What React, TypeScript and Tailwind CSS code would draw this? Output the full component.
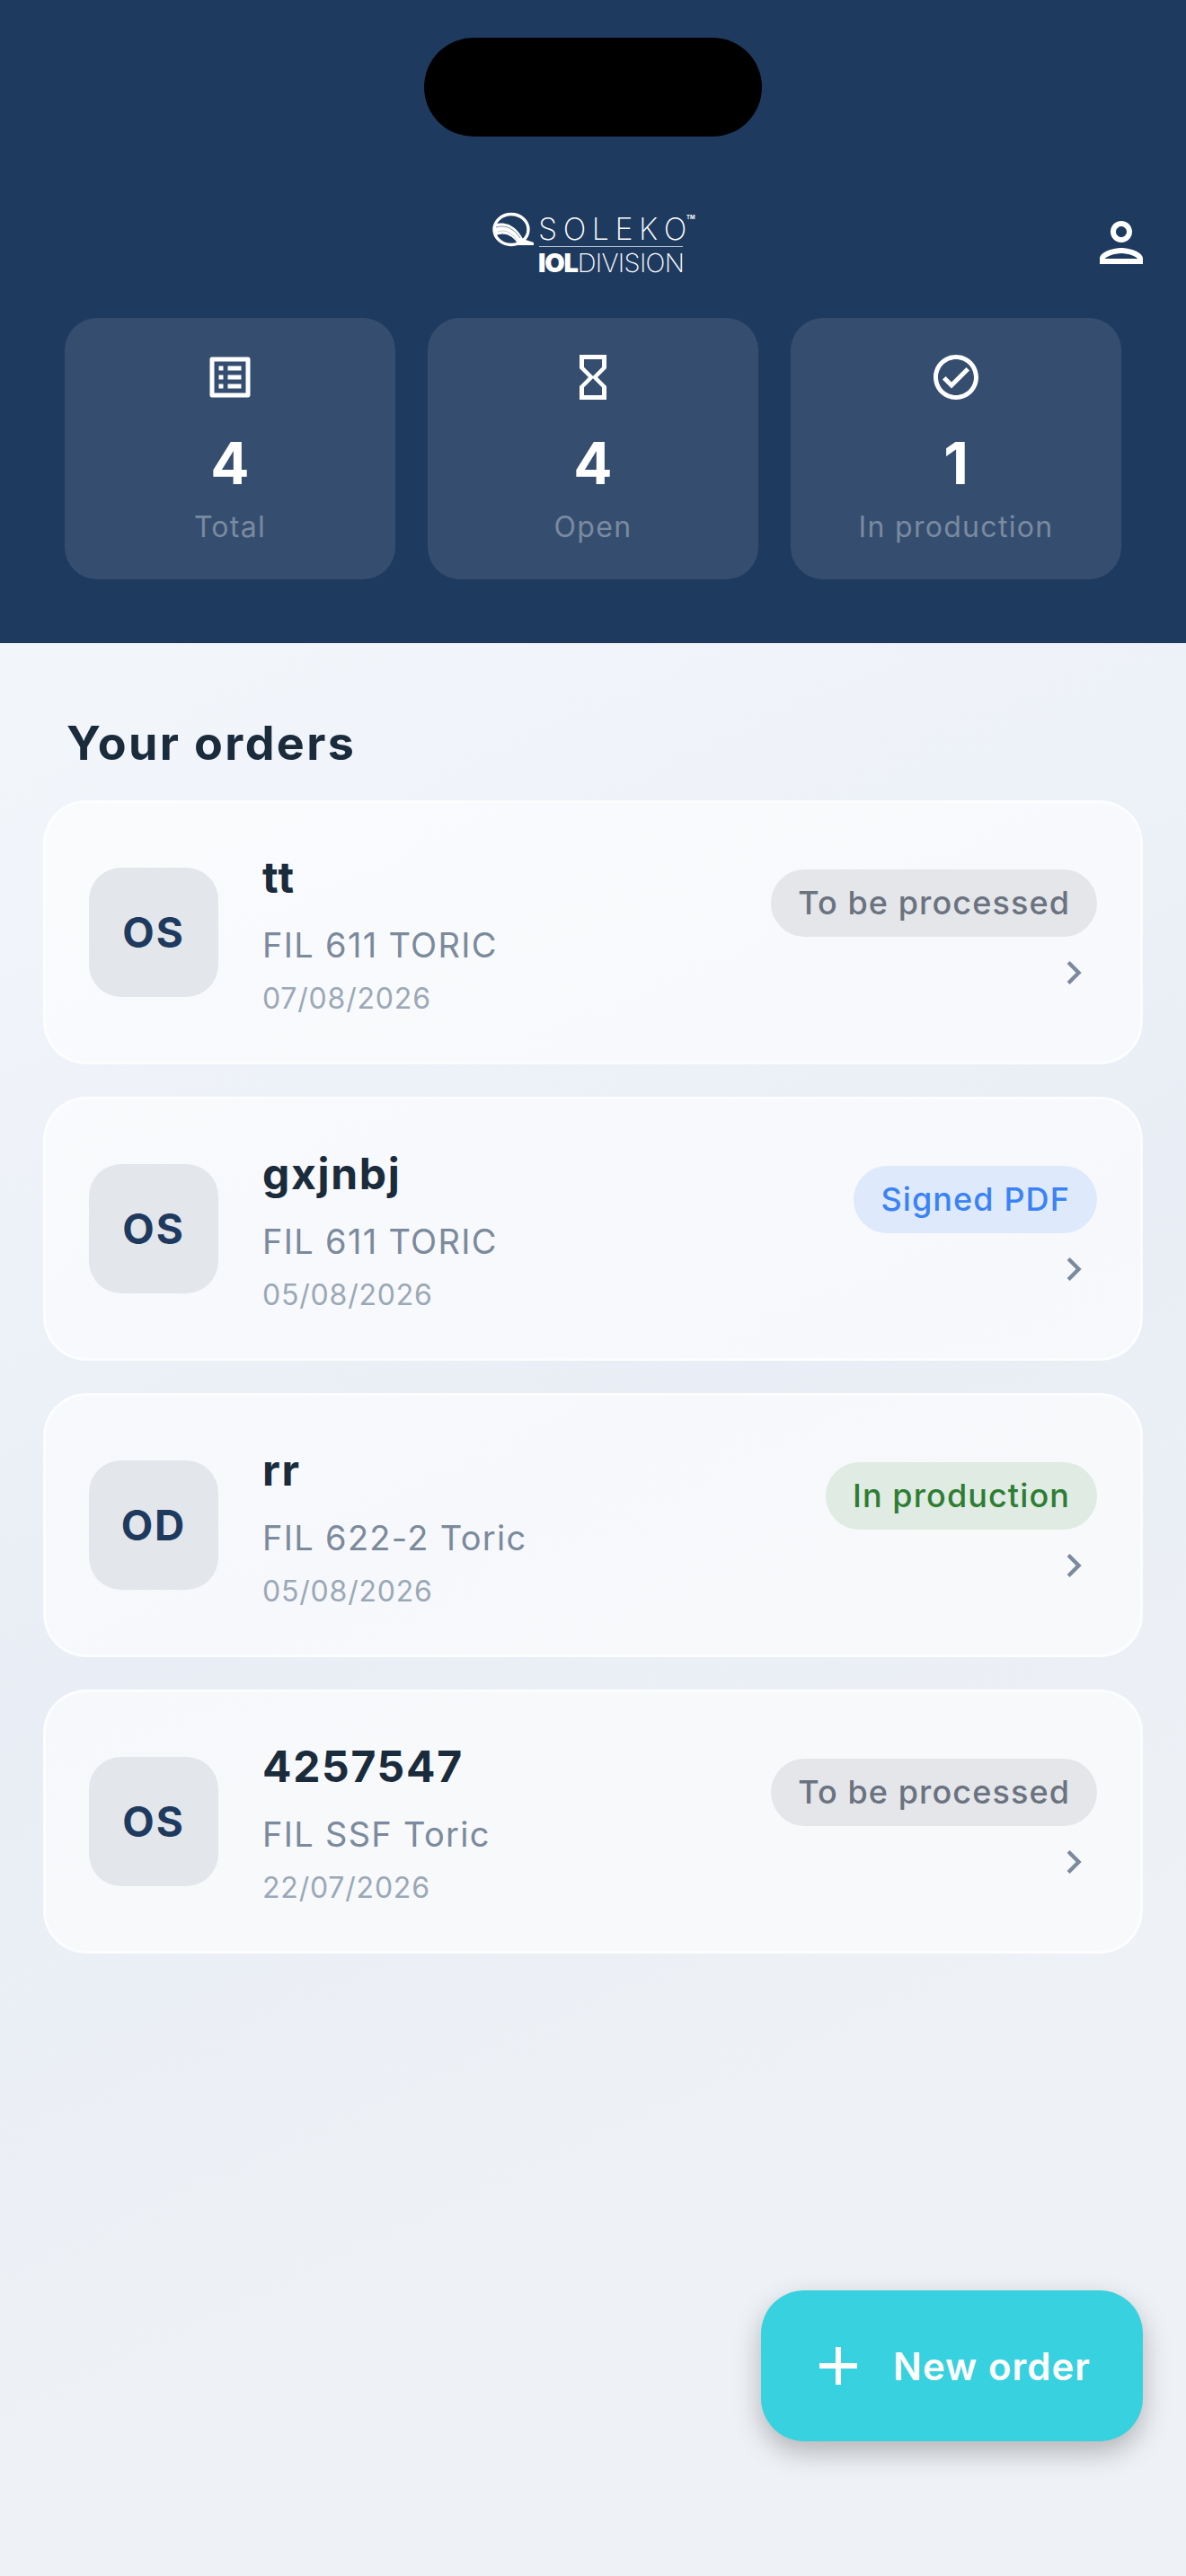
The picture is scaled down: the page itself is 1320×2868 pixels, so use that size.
import { MdOutlineListAlt, MdHourglassEmpty, MdOutlineCheckCircle, MdOutlinePerson, MdChevronRight, MdAdd } from 'react-icons/md';
import type { IconType } from 'react-icons';

type Stat = { icon: IconType; value: string; label: string };
type Order = { eye: string; name: string; model: string; date: string; status: string; pill: string };

const stats: Stat[] = [
  { icon: MdOutlineListAlt, value: '4', label: 'Total' },
  { icon: MdHourglassEmpty, value: '4', label: 'Open' },
  { icon: MdOutlineCheckCircle, value: '1', label: 'In production' },
];

const GRAY = 'bg-[#e4e6e9] text-[#6b7280]';
const BLUE = 'bg-[#deeafb] text-[#3b82f6]';
const GREEN = 'bg-[#dfebe3] text-[#2e7d32]';

const orders: Order[] = [
  { eye: 'OS', name: 'tt', model: 'FIL 611 TORIC', date: '07/08/2026', status: 'To be processed', pill: GRAY },
  { eye: 'OS', name: 'gxjnbj', model: 'FIL 611 TORIC', date: '05/08/2026', status: 'Signed PDF', pill: BLUE },
  { eye: 'OD', name: 'rr', model: 'FIL 622-2 Toric', date: '05/08/2026', status: 'In production', pill: GREEN },
  { eye: 'OS', name: '4257547', model: 'FIL SSF Toric', date: '22/07/2026', status: 'To be processed', pill: GRAY },
];

// Soleko logo: Q mark is drawn, the words stay real text
function Logo(): React.ReactElement {
  return (
    <div className="flex justify-center">
      <div className="relative h-[70px] w-[224px] text-white">
        <svg viewBox="0 0 48 40" className="absolute left-0 top-[1px] h-[40px] w-[48px]" fill="none">
          <ellipse cx="21" cy="19.5" rx="19" ry="17" stroke="white" strokeWidth="3.4" />
          <path d="M2 14 C10 11 24 11 34 30 L46 34 L46 37 L29 37 C24 26 12 21 2 27 Z" fill="white" />
          <path d="M4 17 C14 14 24 18 31 29" stroke="#1e3a5f" strokeWidth="0.8" opacity="0.7" />
          <path d="M6 22 C14 19 22 23 27 31" stroke="#1e3a5f" strokeWidth="0.5" opacity="0.5" />
        </svg>
        <div className="absolute left-[51px] top-[7px] whitespace-nowrap text-[34px] leading-[26px] font-extralight tracking-[6.5px]">
          SOLEK<span className="tracking-normal">O</span>
        </div>
        <div className="absolute left-[216px] top-[4px] text-[6px] leading-[6px] font-bold">TM</div>
        <div className="absolute left-[52px] top-[39px] h-[1px] w-[160px] bg-white/70" />
        <div className="absolute left-[51px] top-[42px] flex whitespace-nowrap text-[29px] leading-[32px]">
          <span className="font-black tracking-[-1.2px]">IOL</span>
          <span className="font-extralight tracking-[-0.7px]">DIVISION</span>
        </div>
      </div>
    </div>
  );
}

function StatCard({ stat }: { stat: Stat }): React.ReactElement {
  const Icon = stat.icon;
  return (
    <div className="flex h-[291px] flex-col items-center rounded-[36px] bg-white/10 pt-[36px]">
      <Icon className="h-[60px] w-[60px] text-white" />
      <div className="mt-[30px] text-[64px] leading-[72px] font-bold text-white">{stat.value}</div>
      <div className="mt-[15px] text-[32px] leading-[40px] tracking-[1.3px] text-white/35">{stat.label}</div>
    </div>
  );
}

function OrderCard({ order }: { order: Order }): React.ReactElement {
  return (
    <div className="flex h-[294px] items-center rounded-[48px] border-[3px] border-white/60 bg-white/60 px-[48px]">
      <div className="flex h-[144px] w-[144px] shrink-0 items-center justify-center rounded-[36px] bg-[#e3e6ea] text-[46px] font-bold tracking-[2px] text-[#1e3a5f]">
        {order.eye}
      </div>
      <div className="ml-[49px] flex min-w-0 flex-1 flex-col pt-[5px]">
        <div className="text-[48px] leading-[56px] font-bold tracking-[1.7px] text-[#1a2b3c]">{order.name}</div>
        <div className="mt-[24px] text-[38px] leading-[46px] tracking-[1.3px] text-[#7b8a9c]">{order.model}</div>
        <div className="mt-[17px] text-[32px] leading-[40px] tracking-[0.8px] text-[#9ba8b6]">{order.date}</div>
      </div>
      <div className="flex flex-col items-end gap-[14px]">
        <div className={`flex h-[75px] items-center rounded-full px-[30px] text-[36px] font-medium tracking-[1.1px] ${order.pill}`}>
          {order.status}
        </div>
        <MdChevronRight className="h-[52px] w-[52px] text-[#7b8a9c]" />
      </div>
    </div>
  );
}

export default function App(): React.ReactElement {
  return (
    <div className="relative h-[2868px] w-[1320px] overflow-hidden bg-[linear-gradient(155deg,#f7f9fd_0%,#f2f5fa_25%,#e9eef6_55%,#eef1f5_80%,#eef1f5_100%)] font-['Inter',sans-serif]">
      {/* dynamic island */}
      <div className="absolute left-[472px] top-[42px] h-[110px] w-[376px] rounded-[55px] bg-black" />

      <header className="h-[716px] bg-[#1e3a5f] px-[36px] pt-[234px]">
        <div className="grid h-[72px] grid-cols-[72px_1fr_72px] items-center">
          <div />
          <Logo />
          <MdOutlinePerson className="h-[72px] w-[72px] text-white" />
        </div>
        <div className="mt-[48px] grid grid-cols-3 gap-[36px] px-[36px]">
          {stats.map((s) => (
            <StatCard key={s.label} stat={s} />
          ))}
        </div>
      </header>

      <main className="px-[48px]">
        <h1 className="ml-[26px] mt-[80px] text-[52px] leading-[64px] font-bold tracking-[2.4px] text-[#1a2b3c]">Your orders</h1>
        <div className="mt-[31px] flex flex-col gap-[36px]">
          {orders.map((o) => (
            <OrderCard key={o.name} order={o} />
          ))}
        </div>
      </main>

      <button className="absolute left-[847px] top-[2550px] flex h-[168px] w-[425px] items-center rounded-[48px] bg-[#38d1df] pl-[54px] text-[42px] font-semibold tracking-[1px] text-white shadow-[0_12px_30px_rgba(0,0,0,0.25)]">
        <MdAdd className="-ml-[4px] h-[72px] w-[72px]" />
        <span className="ml-[25px]">New order</span>
      </button>
    </div>
  );
}
